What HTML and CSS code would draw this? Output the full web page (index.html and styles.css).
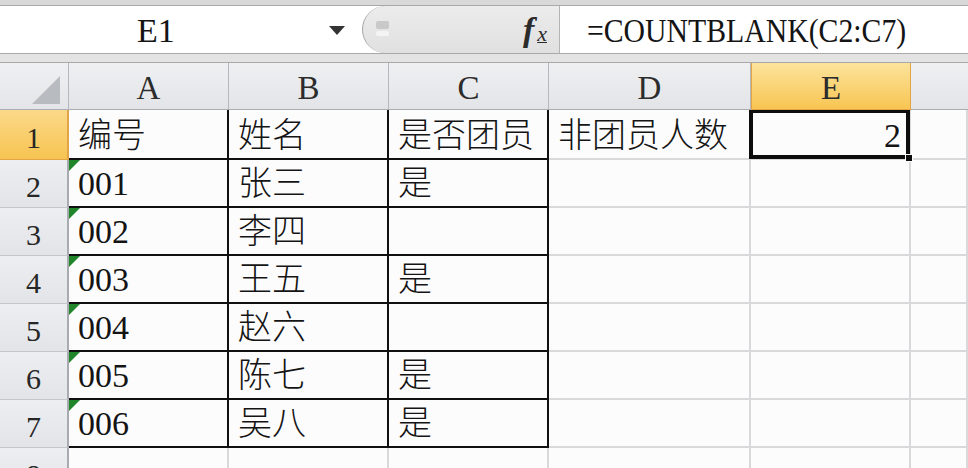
FILE: index.html
```html
<!DOCTYPE html>
<html lang="zh-CN">
<head>
<meta charset="utf-8">
<title>COUNTBLANK</title>
<link rel="stylesheet" href="styles.css">
</head>
<body>
<div class="topstrip"></div>
<div class="toolbar">
  <div class="namebox"><span class="name">E1</span><span class="caret"></span></div>
  <div class="pill">
    <svg class="btnicon" width="16" height="18" viewBox="0 0 16 18"><rect x="1" y="1" width="13" height="8" rx="2" fill="#c9c9c9"/><rect x="1" y="11" width="13" height="5" rx="2" fill="#f4f4f4"/></svg>
    <span class="fx"><i>f</i><span class="fxx">x</span></span>
  </div>
  <div class="formula"><span class="ftext">=COUNTBLANK(C2:C7)</span></div>
</div>
<div class="gapstrip"></div>
<div class="sheet">
  <div class="corner"><span class="tri"></span></div>
  <div class="hd">A</div><div class="hd">B</div><div class="hd">C</div><div class="hd">D</div><div class="hd hd-sel">E</div><div class="hd hd-last"></div>

  <div class="rh rh-sel">1</div>
  <div class="c t">编号</div><div class="c t">姓名</div><div class="c t">是否团员</div><div class="c">非团员人数</div><div class="c sel"><span class="val">2</span></div><div class="c"></div>

  <div class="rh">2</div>
  <div class="c t num">001</div><div class="c t">张三</div><div class="c t">是</div><div class="c"></div><div class="c"></div><div class="c"></div>

  <div class="rh">3</div>
  <div class="c t num">002</div><div class="c t">李四</div><div class="c t"></div><div class="c"></div><div class="c"></div><div class="c"></div>

  <div class="rh">4</div>
  <div class="c t num">003</div><div class="c t">王五</div><div class="c t">是</div><div class="c"></div><div class="c"></div><div class="c"></div>

  <div class="rh">5</div>
  <div class="c t num">004</div><div class="c t">赵六</div><div class="c t"></div><div class="c"></div><div class="c"></div><div class="c"></div>

  <div class="rh">6</div>
  <div class="c t num">005</div><div class="c t">陈七</div><div class="c t">是</div><div class="c"></div><div class="c"></div><div class="c"></div>

  <div class="rh">7</div>
  <div class="c t num">006</div><div class="c t">吴八</div><div class="c t">是</div><div class="c"></div><div class="c"></div><div class="c"></div>

  <div class="rh">8</div>
  <div class="c"></div><div class="c"></div><div class="c"></div><div class="c"></div><div class="c"></div><div class="c"></div>
</div>
</body>
</html>
```

FILE: styles.css
```css
html, body {
  margin: 0;
  padding: 0;
  width: 968px;
  height: 468px;
  overflow: hidden;
  background: #fdfcfd;
  font-family: "Liberation Serif", "Noto Sans CJK SC", serif;
  color: #141414;
}

.topstrip {
  height: 5px;
  background: #d9d9d9;
  border-bottom: 1px solid #a9a9a9;
}

.toolbar {
  display: flex;
  height: 47px;
  background: #ffffff;
  border-bottom: 1px solid #a9a9a9;
}

.namebox {
  flex: 0 0 362px;
  display: flex;
  align-items: center;
  position: relative;
}

.name {
  font-size: 34px;
  margin-left: 137px;
  line-height: 1;
  padding-top: 2px;
}

.caret {
  width: 0;
  height: 0;
  border-left: 8px solid transparent;
  border-right: 8px solid transparent;
  border-top: 9px solid #333;
  margin-left: 154px;
  margin-top: 2px;
}

.pill {
  flex: 0 0 198px;
  box-sizing: border-box;
  background: linear-gradient(#ececec, #e0e0e0);
  border: 1px solid #a4a4a4;
  border-right: 1px solid #b4b4b4;
  border-top: none;
  border-bottom: none;
  border-radius: 24px 0 0 24px;
  display: flex;
  align-items: center;
  justify-content: space-between;
  padding: 0 12px 0 12px;
}

.btnicon {
  display: block;
  margin-top: -2px;
}

.fx {
  font-family: "Liberation Serif", serif;
  color: #2b2b2b;
  line-height: 1;
  display: flex;
  align-items: baseline;
}

.fx i {
  font-size: 34px;
  font-weight: bold;
  padding-right: 3px;
}

.fxx {
  font-size: 22px;
  font-style: italic;
  text-decoration: underline;
  text-decoration-thickness: 1px;
}

.formula {
  flex: 1 1 auto;
  display: flex;
  align-items: center;
  background: #ffffff;
}

.ftext {
  display: inline-block;
  font-size: 34px;
  line-height: 1;
  margin-left: 27px;
  padding-top: 2px;
  transform: scaleX(0.875);
  transform-origin: left center;
  white-space: nowrap;
}

.gapstrip {
  height: 8px;
  background: #e3e3e3;
  border-bottom: 1px solid #a9a9a9;
}

.sheet {
  display: grid;
  grid-template-columns: 69px 160px 160px 160px 202px 160px 1fr;
  grid-template-rows: 47px 50px repeat(7, 48px);
}

.sheet > div {
  box-sizing: border-box;
}

.corner {
  background: linear-gradient(#eff0f2, #e3e5e8);
  border-right: 1px solid #b4b8bd;
  border-bottom: 1px solid #a9adb2;
  position: relative;
}

.tri {
  position: absolute;
  left: 32px;
  top: 13px;
  width: 0;
  height: 0;
  border-left: 28px solid transparent;
  border-bottom: 28px solid #b8bcc1;
}

.hd {
  background: linear-gradient(#eff0f2, #e2e4e7);
  border-right: 1px solid #b4b8bd;
  border-bottom: 1px solid #a9adb2;
  display: flex;
  align-items: center;
  justify-content: center;
  font-size: 33px;
  color: #2c2c2c;
  line-height: 1;
  padding-top: 4px;
}

.hd-sel {
  background: linear-gradient(#fce39c, #f8c552);
  border-left: 1px solid #e2a445;
  border-right: 1px solid #e2a445;
  border-bottom: 1px solid #e2a445;
}

.hd-last {
  border-right: none;
}

.rh {
  background: linear-gradient(#eceef1, #e2e4e7);
  border-right: 2px solid #a7abb0;
  border-bottom: 1px solid #c4c7cb;
  display: flex;
  align-items: center;
  justify-content: center;
  font-size: 30px;
  color: #262626;
  line-height: 1;
  padding-top: 6px;
}

.rh-sel {
  background: linear-gradient(#fbd98a, #f7c451);
  border-bottom: 1px solid #e2a445;
  border-right: 2px solid #e2a445;
}

.c {
  border-right: 2px solid #d9d9dc;
  border-bottom: 2px solid #d9d9dc;
  display: flex;
  align-items: flex-end;
  padding: 0 0 5px 9px;
  font-size: 34px;
  font-weight: 300;
  line-height: 1;
  white-space: nowrap;
  position: relative;
}

.t {
  border-right: 2px solid #111;
  border-bottom: 2px solid #111;
}

.num::before {
  content: "";
  position: absolute;
  left: 0;
  top: 0;
  width: 0;
  height: 0;
  border-top: 11px solid #21862a;
  border-right: 11px solid transparent;
}

.sel {
  justify-content: flex-end;
  padding-right: 8px;
}

.sel::after {
  content: "";
  position: absolute;
  left: -2px;
  top: 0;
  right: -1px;
  bottom: -1px;
  border: 4px solid #0d0d0d;
  border-top-width: 3px;
}

.sel::before {
  content: "";
  position: absolute;
  right: -4px;
  bottom: -4px;
  width: 6px;
  height: 6px;
  background: #0d0d0d;
  border: 1px solid #ffffff;
  z-index: 2;
}

.val {
  font-size: 34px;
}
```
